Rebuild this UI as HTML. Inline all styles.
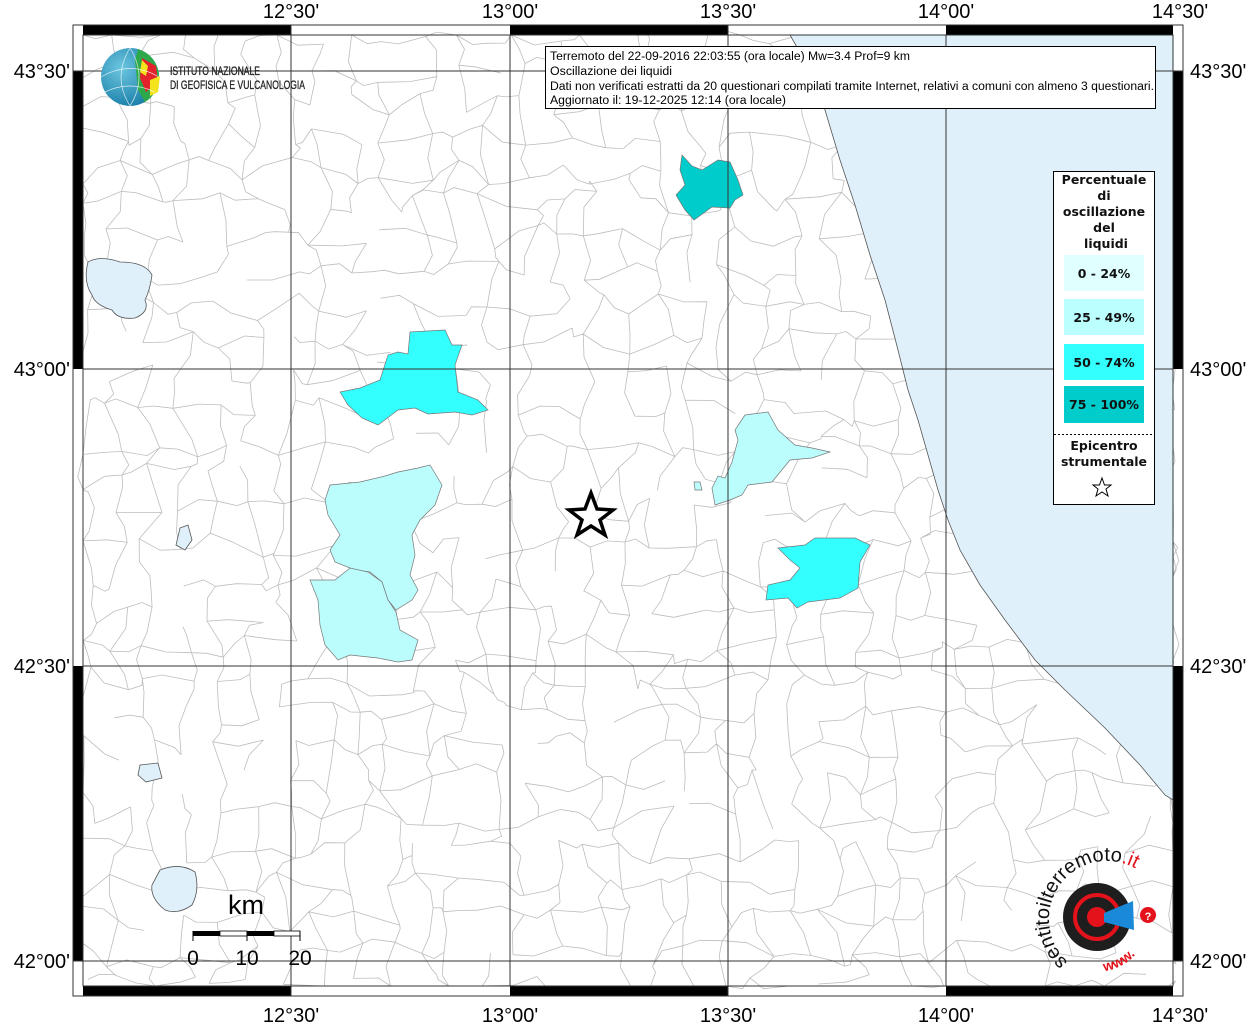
<!DOCTYPE html>
<html><head><meta charset="utf-8"><style>
html,body{margin:0;padding:0;background:#fff;width:1256px;height:1024px;overflow:hidden}
svg{display:block}
.ax{font-family:"Liberation Sans",sans-serif;font-size:20px;fill:#000}
</style></head><body>
<svg id="s" width="1256" height="1024" viewBox="0 0 1256 1024" xmlns="http://www.w3.org/2000/svg">
<rect x="83" y="35" width="1090" height="951" fill="#fff"/>
<g id="bnd" stroke="#bdbdbd" stroke-width="0.8" fill="none"></g>
<!-- sea -->
<path d="M790,35 L1173,35 L1173,800 L1165,795 L1140,765 L1105,728 L1065,690 L1035,660 L1005,620 L980,585 L960,550 L948,520 L938,490 L928,455 L918,420 L908,390 L898,350 L885,300 L870,255 L855,205 L840,160 L825,110 L810,70 Z" fill="#dff0fb" stroke="#555" stroke-width="0.8"/>
<!-- lakes -->
<path d="M88,262 Q100,255 120,262 Q145,262 152,275 Q150,290 145,300 Q150,312 135,318 Q118,320 112,310 Q95,305 92,295 Q83,282 88,262Z" fill="#dff0fb" stroke="#555" stroke-width="0.8"/>
<path d="M160,870 Q180,862 195,872 Q200,890 192,905 Q178,915 165,910 Q150,898 152,885 Z" fill="#dff0fb" stroke="#555" stroke-width="0.8"/>
<path d="M140,765 L158,763 L162,778 L146,782 L138,775Z" fill="#dff0fb" stroke="#555" stroke-width="0.8"/>
<path d="M180,528 L188,525 L192,540 L185,550 L176,545Z" fill="#dff0fb" stroke="#555" stroke-width="0.8"/>
<!-- regions -->
<g stroke="#777" stroke-width="0.7">
<path d="M682,155 L692,166 L702,170 L718,160 L730,162 L738,180 L743,195 L735,200 L730,208 L712,207 L694,220 L685,210 L676,195 L685,185 L680,170Z" fill="#00cccc"/>
<path d="M410,332 L445,330 L452,345 L462,345 L455,365 L458,392 L478,400 L488,410 L472,415 L455,412 L428,414 L415,408 L398,410 L378,425 L362,418 L348,405 L340,392 L360,388 L380,380 L388,355 L398,352 L408,354Z" fill="#33ffff"/>
<path d="M778,548 L805,545 L815,538 L855,538 L870,545 L860,562 L858,588 L840,598 L808,602 L797,608 L788,598 L766,600 L768,585 L790,580 L800,568 L790,560Z" fill="#33ffff"/>
<path d="M745,415 L768,412 L778,430 L795,445 L812,448 L830,452 L812,458 L790,460 L772,482 L748,485 L742,495 L730,500 L715,505 L712,488 L718,476 L725,478 L732,462 L738,440 L735,430Z" fill="#bbfcfc"/>
<path d="M694,482 L700,482 L702,490 L695,490Z" fill="#bbfcfc"/>
<path d="M330,485 L360,482 L385,476 L398,472 L418,468 L430,465 L442,485 L435,505 L420,520 L412,535 L415,555 L410,575 L418,590 L412,600 L396,610 L388,600 L382,582 L370,572 L355,570 L335,562 L330,550 L340,535 L328,515 L325,500Z" fill="#bbfcfc"/>
<path d="M310,580 L335,580 L350,568 L368,572 L382,582 L388,600 L396,612 L400,630 L418,640 L412,660 L398,662 L378,658 L350,655 L338,660 L325,645 L320,625 L318,600Z" fill="#bbfcfc"/>
</g>
<!-- grid -->
<g stroke="#333" stroke-width="1">
<line x1="291" y1="35" x2="291" y2="986"/><line x1="510" y1="35" x2="510" y2="986"/><line x1="728" y1="35" x2="728" y2="986"/><line x1="946" y1="35" x2="946" y2="986"/>
<line x1="83" y1="71" x2="1173" y2="71"/><line x1="83" y1="369" x2="1173" y2="369"/><line x1="83" y1="666" x2="1173" y2="666"/><line x1="83" y1="961" x2="1173" y2="961"/>
</g>
<!-- frame -->
<g fill="#000">
<rect x="83" y="25" width="208" height="10"/><rect x="510" y="25" width="218" height="10"/><rect x="946" y="25" width="227" height="10"/>
<rect x="83" y="986" width="208" height="10"/><rect x="510" y="986" width="218" height="10"/><rect x="946" y="986" width="227" height="10"/>
<rect x="73" y="71" width="10" height="298"/><rect x="73" y="666" width="10" height="295"/>
<rect x="1173" y="71" width="10" height="298"/><rect x="1173" y="666" width="10" height="295"/>
</g>
<g fill="none" stroke="#333" stroke-width="1">
<rect x="73" y="25" width="1110" height="971"/><rect x="83" y="35" width="1090" height="951"/>
<line x1="73" y1="71" x2="83" y2="71"/><line x1="73" y1="961" x2="83" y2="961"/><line x1="1173" y1="71" x2="1183" y2="71"/><line x1="1173" y1="961" x2="1183" y2="961"/>
<line x1="291" y1="25" x2="291" y2="35"/><line x1="728" y1="25" x2="728" y2="35"/><line x1="291" y1="986" x2="291" y2="996"/><line x1="728" y1="986" x2="728" y2="996"/>
</g>
<!-- axis labels -->
<g class="ax" text-anchor="middle">
<text x="291" y="18">12°30'</text><text x="510" y="18">13°00'</text><text x="728" y="18">13°30'</text><text x="946" y="18">14°00'</text><text x="1180" y="18">14°30'</text>
<text x="291" y="1022">12°30'</text><text x="510" y="1022">13°00'</text><text x="728" y="1022">13°30'</text><text x="946" y="1022">14°00'</text><text x="1180" y="1022">14°30'</text>
</g>
<g class="ax" text-anchor="end"><text x="70" y="78">43°30'</text><text x="70" y="376">43°00'</text><text x="70" y="673">42°30'</text><text x="70" y="968">42°00'</text></g>
<g class="ax"><text x="1190" y="78">43°30'</text><text x="1190" y="376">43°00'</text><text x="1190" y="673">42°30'</text><text x="1190" y="968">42°00'</text></g>
<!-- star -->
<path d="M591,493 L597,509 L613,510 L600,520 L605,535 L591,526 L577,535 L582,520 L569,510 L585,509Z" fill="#fff" stroke="#000" stroke-width="3.5" stroke-linejoin="miter"/>
<!-- title -->
<rect x="545.5" y="46.5" width="610" height="62" fill="#fff" stroke="#000"/>
<g font-family="Liberation Sans,sans-serif" font-size="11.5" fill="#000" transform="translate(550,0)">
<text x="0" y="60" textLength="360" lengthAdjust="spacingAndGlyphs">Terremoto del 22-09-2016 22:03:55 (ora locale) Mw=3.4 Prof=9 km</text>
<text x="0" y="75" textLength="122" lengthAdjust="spacingAndGlyphs">Oscillazione dei liquidi</text>
<text x="0" y="90" textLength="604" lengthAdjust="spacingAndGlyphs">Dati non verificati estratti da 20 questionari compilati tramite Internet, relativi a comuni con almeno 3 questionari.</text>
<text x="0" y="104" textLength="236" lengthAdjust="spacingAndGlyphs">Aggiornato il: 19-12-2025 12:14 (ora locale)</text>
</g>
<!-- legend -->
<rect x="1053.5" y="171.5" width="101" height="333" fill="#fff" stroke="#000"/>
<g font-family="DejaVu Sans,sans-serif" font-size="12.5" font-weight="bold" fill="#111" text-anchor="middle">
<text x="1104" y="184">Percentuale</text><text x="1104" y="200">di</text><text x="1104" y="216">oscillazione</text><text x="1104" y="232">del</text><text x="1106" y="248">liquidi</text>
<rect x="1064" y="255" width="80" height="36" fill="#e0ffff"/><text x="1104" y="278">0 - 24%</text>
<rect x="1064" y="299" width="80" height="36" fill="#bbffff"/><text x="1104" y="322">25 - 49%</text>
<rect x="1064" y="344" width="80" height="36" fill="#33ffff"/><text x="1104" y="367">50 - 74%</text>
<rect x="1064" y="386" width="80" height="37" fill="#00cccc"/><text x="1104" y="409">75 - 100%</text>
<line x1="1054" y1="434.5" x2="1154" y2="434.5" stroke="#000" stroke-dasharray="2,2" stroke-width="1"/>
<text x="1104" y="450">Epicentro</text><text x="1104" y="466">strumentale</text>
</g>
<path d="M1102,478 L1104.5,485 L1111,485 L1106,489 L1108,496 L1102,492 L1096,496 L1098,489 L1093,485 L1099.5,485Z" fill="#fff" stroke="#000" stroke-width="1"/>
<!-- scale -->
<g>
<rect x="193" y="931" width="27" height="5" fill="#000"/><rect x="220" y="931" width="27" height="5" fill="#fff" stroke="#000" stroke-width="0.8"/>
<rect x="247" y="931" width="27" height="5" fill="#000"/><rect x="274" y="931" width="26" height="5" fill="#fff" stroke="#000" stroke-width="0.8"/>
<g stroke="#000"><line x1="193" y1="931" x2="193" y2="941"/><line x1="247" y1="931" x2="247" y2="941"/><line x1="300" y1="931" x2="300" y2="941"/></g>
<text x="246" y="914" font-family="Liberation Sans,sans-serif" font-size="27" text-anchor="middle">km</text>
<g font-family="Liberation Sans,sans-serif" font-size="21" text-anchor="middle"><text x="193" y="965">0</text><text x="247" y="965">10</text><text x="300" y="965">20</text></g>
</g>
<!-- INGV logo -->
<defs><radialGradient id="g1" cx="0.35" cy="0.35" r="0.7"><stop offset="0" stop-color="#6cc6e0"/><stop offset="1" stop-color="#1a7fa8"/></radialGradient></defs>
<circle cx="130" cy="77" r="29" fill="url(#g1)"/>
<path d="M138,49 A29,29 0 0 1 159,77 A29,29 0 0 1 145,102 L138,90 L135,60Z" fill="#2da84a"/>
<path d="M142,58 L156,66 L158,82 L146,92 L140,78Z" fill="#e3222b"/>
<path d="M142,60 L148,66 L146,76 L140,72Z" fill="#f4e31b"/>
<path d="M150,80 L160,76 L158,92 L150,96Z" fill="#f4e31b"/>
<g stroke="#fff" stroke-width="0.7" fill="none" opacity="0.8"><path d="M101,77 Q130,60 159,77"/><path d="M105,92 Q130,80 155,92"/><path d="M130,48 Q112,77 130,106"/><path d="M130,48 Q148,77 130,106"/></g>
<g font-family="Liberation Sans,sans-serif" font-size="12" fill="#222" stroke="#222" stroke-width="0.3"><text x="170" y="75" textLength="90" lengthAdjust="spacingAndGlyphs">ISTITUTO NAZIONALE</text><text x="170" y="89" textLength="135" lengthAdjust="spacingAndGlyphs">DI GEOFISICA E VULCANOLOGIA</text></g>
<!-- HSIT logo -->
<circle cx="1097" cy="917" r="34" fill="#1e1e1e"/>
<circle cx="1097" cy="917" r="22" fill="none" stroke="#e3121b" stroke-width="4"/>
<circle cx="1097" cy="917" r="10" fill="#e3121b"/>
<path d="M1104,913 L1133,901 L1134,930 L1104,922Z" fill="#1a8ad8"/>
<circle cx="1148" cy="915" r="8" fill="#e3121b"/><text x="1148" y="920" font-family="Liberation Sans,sans-serif" font-size="11" font-weight="bold" fill="#fff" text-anchor="middle">?</text>
<defs><path id="arc" d="M1068,962 A50,50 0 1 1 1146,876"/><path id="arc2" d="M1075,966 A50,50 0 0 0 1145,938"/></defs>
<text font-family="Liberation Sans,sans-serif" font-size="20" fill="#111"><textPath href="#arc">sentitoilterremoto<tspan fill="#e3121b">.it</tspan></textPath></text>
<text font-family="Liberation Sans,sans-serif" font-size="14" font-weight="bold" fill="#e3121b"><textPath href="#arc2" startOffset="30">www.</textPath></text>
</svg>
<script>
(function(){
var g=document.getElementById('bnd');var seed=11;function r(){seed=(seed*16807)%2147483647;return seed/2147483647;}
var sx=34,sy=34,nx=Math.ceil(1090/sx)+1,ny=Math.ceil(951/sy)+1,P=[];
for(var j=0;j<ny;j++){P[j]=[];for(var i=0;i<nx;i++){var x=83+i*sx+(r()-0.5)*28,y=35+j*sy+(r()-0.5)*28;x=Math.max(83,Math.min(1173,x));y=Math.max(35,Math.min(986,y));P[j][i]=[x,y];}}
var d='';function seg(a,b){var mx=(a[0]+b[0])/2+(r()-0.5)*14,my=(a[1]+b[1])/2+(r()-0.5)*14;d+='M'+a[0].toFixed(1)+','+a[1].toFixed(1)+'L'+mx.toFixed(1)+','+my.toFixed(1)+'L'+b[0].toFixed(1)+','+b[1].toFixed(1);}
for(var j=0;j<ny;j++)for(var i=0;i<nx;i++){if(i<nx-1&&r()<0.72)seg(P[j][i],P[j][i+1]);if(j<ny-1&&r()<0.72)seg(P[j][i],P[j+1][i]);}
var p=document.createElementNS('http://www.w3.org/2000/svg','path');p.setAttribute('d',d);g.appendChild(p);
})();
</script>
</body></html>
